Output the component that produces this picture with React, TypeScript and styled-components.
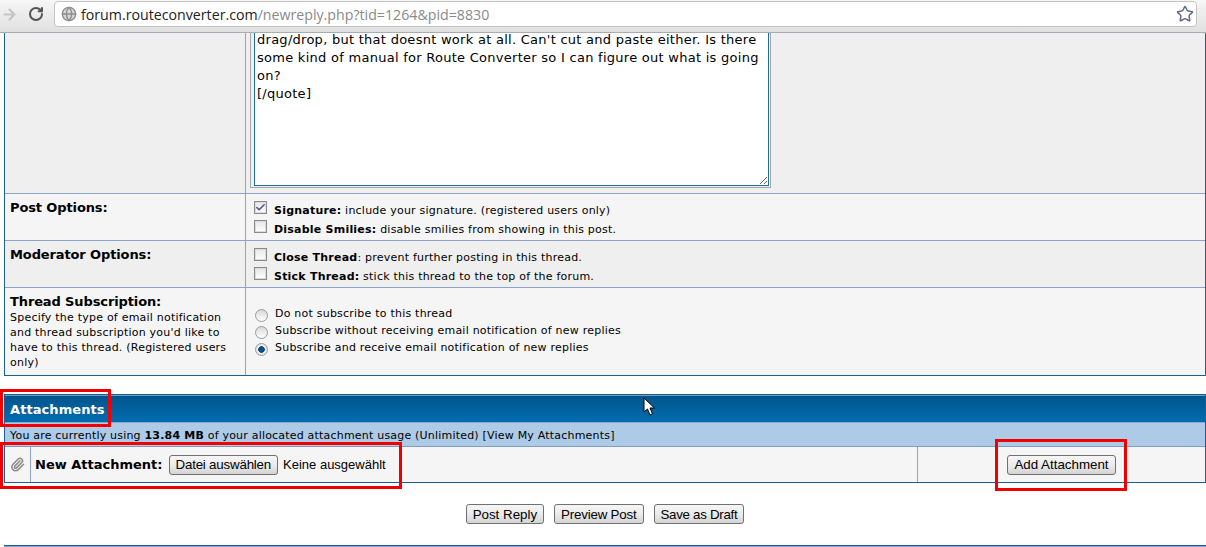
import React from 'react';
import styled, { createGlobalStyle } from 'styled-components';
import { ArrowRight, RotateCw, Star, Globe, Paperclip, Check } from 'lucide-react';

const GlobalStyle = createGlobalStyle`
    html, body {
        margin: 0;
        padding: 0;
        background: #fff;
    }
    body {
        font-family: 'DejaVu Sans', Verdana, sans-serif;
        font-size: 11px;
        letter-spacing: 0.22px;
        color: #000;
    }
`;

const Page = styled.div`
    position: relative;
    width: 1206px;
    height: 547px;
    overflow: hidden;
    background: #fff;
`;

const BrowserBar = styled.div`
    position: relative;
    z-index: 2;
    display: flex;
    align-items: center;
    height: 33px;
    padding: 0 9px 4px 0;
    box-sizing: border-box;
    border-bottom: 1px solid #a9adb3;
    background: linear-gradient(#f6f6f6, #e0e0e0);
`;

const NavButton = styled.span<{ $color: string; $width: number }>`
    display: flex;
    justify-content: center;
    width: ${(p) => p.$width}px;
    color: ${(p) => p.$color};
`;

const AddressBar = styled.div`
    flex: 1;
    display: flex;
    align-items: center;
    height: 26px;
    padding: 0 2px 0 6px;
    box-sizing: border-box;
    background: #fff;
    border: 1px solid #c4c4c4;
    border-radius: 4px;
    font-family: 'Open Sans', sans-serif;
    font-size: 14.2px;
    letter-spacing: 0;
    color: #8a8a8a;
`;

const Host = styled.span`
    margin-left: 4px;
    color: #222;
`;

const Url = styled.span`
    flex: 1;
`;

const Content = styled.div`
    margin-top: -1px;
    padding: 0 0 0 4px;
`;

const FormTable = styled.div`
    border: 1px solid #1d5f91;
    border-top: 0;
`;

const Row = styled.div<{ $height: number; $alt?: boolean }>`
    display: grid;
    grid-template-columns: 241px 1fr;
    height: ${(p) => p.$height}px;
    background: ${(p) => (p.$alt ? '#efefef' : '#f5f5f5')};
    border-top: 1px solid #8aa5c9;
    &:first-child {
        border-top: 0;
    }
`;

const LabelCell = styled.div`
    padding: 6px 5px 5px;
    border-right: 1px solid #8aa5c9;
    line-height: 15px;
`;

const RowTitle = styled.div`
    font-size: 13px;
    font-weight: bold;
    line-height: 16px;
    letter-spacing: -0.12px;
`;

const OptionsCell = styled.div<{ $top: number; $gap: number }>`
    display: flex;
    flex-direction: column;
    gap: ${(p) => p.$gap}px;
    padding: ${(p) => p.$top}px 0 0 8px;
    min-width: 0;
`;

const EditorCell = styled.div`
    padding: 0 0 0 4px;
    overflow: hidden;
`;

const EditorFrame = styled.div`
    width: 521px;
    height: 157px;
    margin-top: -1px;
    box-sizing: border-box;
    border: 1px solid #a8a8a8;
    border-top: 0;
    padding: 0 0 1px 3px;
`;

const Editor = styled.textarea`
    display: block;
    width: 515px;
    height: 155px;
    margin: 0;
    padding: 0 2px;
    box-sizing: border-box;
    border: 1px solid #1c6ea4;
    border-top: 0;
    outline: 0;
    resize: both;
    overflow: hidden;
    font-family: 'DejaVu Sans', Verdana, sans-serif;
    font-size: 13px;
    letter-spacing: 0.27px;
    line-height: 18px;
    color: #000;
    background: #fff;
`;

const Option = styled.label`
    display: flex;
    align-items: center;
    height: 17px;
    white-space: nowrap;
`;

const CheckBox = styled.span`
    display: flex;
    align-items: center;
    justify-content: center;
    width: 11px;
    height: 11px;
    margin: -7px 7px 0 0;
    border: 1px solid #8a8a8a;
    box-shadow: inset 0 0 0 1px #dcdcdc;
    background: linear-gradient(#e6e6e6, #fff);
    color: #4a5b9a;
`;

const RadioDot = styled.span<{ $on?: boolean }>`
    width: 11px;
    height: 11px;
    margin: 0 7px 0 1px;
    border: 1px solid #9a9a9a;
    border-radius: 50%;
    background: ${(p) =>
        p.$on
            ? 'radial-gradient(circle, #0a4f86 0 3px, #e8e8e8 3.6px)'
            : 'linear-gradient(#d8d8d8, #fff)'};
`;

const RadioOption = styled(Option)`
    span:last-child {
        margin-top: -4px;
    }
`;

const AttachTable = styled.div`
    margin-top: 18px;
    border: 1px solid #1d5f91;
`;

const AttachHead = styled.div`
    height: 27px;
    padding-left: 5px;
    border-top: 1px solid #6f9cc3;
    box-sizing: border-box;
    background: linear-gradient(#02558a, #006cb2);
    color: #fff;
    font-size: 13px;
    font-weight: bold;
    letter-spacing: 0.08px;
    line-height: 27px;
`;

const UsageBar = styled.div`
    height: 25px;
    padding: 5px 5px 0;
    box-sizing: border-box;
    background: #adcbe7;
    border-top: 1px solid #8aa5c9;
    border-bottom: 1px solid #7f9cc0;
    line-height: 15px;
    letter-spacing: 0.2px;
`;

const AttachRow = styled.div`
    display: grid;
    grid-template-columns: 26px 1fr 287px;
    height: 35px;
    background: #f5f5f5;
`;

const ClipCell = styled.div`
    display: flex;
    align-items: center;
    justify-content: center;
    border-right: 1px solid #8aa5c9;
    color: #8c8c8c;
`;

const FileCell = styled.div`
    display: flex;
    align-items: center;
    padding-left: 4px;
    border-right: 1px solid #8aa5c9;
    font-family: 'Liberation Sans', Arial, sans-serif;
    letter-spacing: 0;
`;

const FileLabel = styled.b`
    margin-right: 6px;
    font-family: 'DejaVu Sans', Verdana, sans-serif;
    font-size: 13px;
`;

const FileName = styled.span`
    margin-left: 5px;
    font-size: 13px;
`;

const ButtonCell = styled.div`
    display: flex;
    align-items: center;
    justify-content: center;
`;

const Button = styled.button<{ $tight?: number }>`
    height: 20px;
    padding: 0 6px;
    border: 1px solid #707070;
    border-radius: 3px;
    background: linear-gradient(#f6f6f6 0%, #ebebeb 50%, #d4d4d4 100%);
    font-family: 'Liberation Sans', Arial, sans-serif;
    font-size: 13.33px;
    letter-spacing: ${(p) => p.$tight ?? 0}px;
    color: #000;
`;

const SubmitRow = styled.div`
    display: flex;
    justify-content: center;
    gap: 10px;
    margin-top: 21px;
`;

const FooterRule = styled.div`
    margin-top: 21px;
    height: 2px;
    background: linear-gradient(#1d5f91 50%, #8aa5c9 50%);
`;

const Highlight = styled.div<{ $x: number; $y: number; $w: number; $h: number }>`
    position: absolute;
    left: ${(p) => p.$x}px;
    top: ${(p) => p.$y}px;
    width: ${(p) => p.$w}px;
    height: ${(p) => p.$h}px;
    box-sizing: border-box;
    border: 3px solid #f00000;
    pointer-events: none;
`;

const Cursor = styled.svg`
    position: absolute;
    left: 643px;
    top: 397px;
`;

const App = () => {
    return (
        <Page>
            <GlobalStyle />
            <BrowserBar>
                <NavButton $color='#c4c4c4' $width={18}>
                    <ArrowRight size={17} strokeWidth={3} />
                </NavButton>
                <NavButton $color='#555' $width={36}>
                    <RotateCw size={16} strokeWidth={3} />
                </NavButton>
                <AddressBar>
                    <Globe size={16} color='#8d8d8d' fill='#d6d6d6' />
                    <Url>
                        <Host>forum.routeconverter.com</Host>/newreply.php?tid=1264&amp;pid=8830
                    </Url>
                    <Star size={18} color='#5f6b85' strokeWidth={2} />
                </AddressBar>
            </BrowserBar>
            <Content>
                <FormTable>
                    <Row $height={161} $alt>
                        <LabelCell />
                        <EditorCell>
                            <EditorFrame>
                                <Editor
                                    readOnly
                                    defaultValue={
                                        "drag/drop, but that doesnt work at all. Can't cut and paste either. Is there some kind of manual for Route Converter so I can figure out what is going on?\n[/quote]"
                                    }
                                />
                            </EditorFrame>
                        </EditorCell>
                    </Row>
                    <Row $height={46}>
                        <LabelCell>
                            <RowTitle>Post Options:</RowTitle>
                        </LabelCell>
                        <OptionsCell $top={8} $gap={2}>
                            <Option>
                                <CheckBox>
                                    <Check size={11} strokeWidth={3.5} />
                                </CheckBox>
                                <span>
                                    <b>Signature:</b> include your signature. (registered users only)
                                </span>
                            </Option>
                            <Option>
                                <CheckBox />
                                <span>
                                    <b>Disable Smilies:</b> disable smilies from showing in this post.
                                </span>
                            </Option>
                        </OptionsCell>
                    </Row>
                    <Row $height={46} $alt>
                        <LabelCell>
                            <RowTitle>Moderator Options:</RowTitle>
                        </LabelCell>
                        <OptionsCell $top={8} $gap={2}>
                            <Option>
                                <CheckBox />
                                <span>
                                    <b>Close Thread</b>: prevent further posting in this thread.
                                </span>
                            </Option>
                            <Option>
                                <CheckBox />
                                <span>
                                    <b>Stick Thread:</b> stick this thread to the top of the forum.
                                </span>
                            </Option>
                        </OptionsCell>
                    </Row>
                    <Row $height={87}>
                        <LabelCell>
                            <RowTitle>Thread Subscription:</RowTitle>
                            Specify the type of email notification and thread subscription you'd like
                            to have to this thread. (Registered users only)
                        </LabelCell>
                        <OptionsCell $top={19} $gap={0}>
                            <RadioOption>
                                <RadioDot />
                                <span>Do not subscribe to this thread</span>
                            </RadioOption>
                            <RadioOption>
                                <RadioDot />
                                <span>Subscribe without receiving email notification of new replies</span>
                            </RadioOption>
                            <RadioOption>
                                <RadioDot $on />
                                <span>Subscribe and receive email notification of new replies</span>
                            </RadioOption>
                        </OptionsCell>
                    </Row>
                </FormTable>
                <AttachTable>
                    <AttachHead>Attachments</AttachHead>
                    <UsageBar>
                        You are currently using <b>13.84 MB</b> of your allocated attachment usage
                        (Unlimited) [View My Attachments]
                    </UsageBar>
                    <AttachRow>
                        <ClipCell>
                            <Paperclip size={15} strokeWidth={2.5} />
                        </ClipCell>
                        <FileCell>
                            <FileLabel>New Attachment:</FileLabel>
                            <Button $tight={-0.2}>Datei auswählen</Button>
                            <FileName>Keine ausgewählt</FileName>
                        </FileCell>
                        <ButtonCell>
                            <Button>Add Attachment</Button>
                        </ButtonCell>
                    </AttachRow>
                </AttachTable>
                <SubmitRow>
                    <Button>Post Reply</Button>
                    <Button $tight={-0.2}>Preview Post</Button>
                    <Button $tight={-0.3}>Save as Draft</Button>
                </SubmitRow>
                <FooterRule />
            </Content>
            <Highlight $x={0} $y={389} $w={111} $h={38} />
            <Highlight $x={0} $y={442} $w={402} $h={47} />
            <Highlight $x={995} $y={439} $w={132} $h={52} />
            <Cursor width='13' height='20' viewBox='0 0 13 20'>
                <path
                    d='M1 1 L1 15 L4.5 12 L7 18 L9.5 17 L7 11 L11.5 11 Z'
                    fill='#fff'
                    stroke='#000'
                    strokeWidth='1'
                />
            </Cursor>
        </Page>
    );
};

export default App;
